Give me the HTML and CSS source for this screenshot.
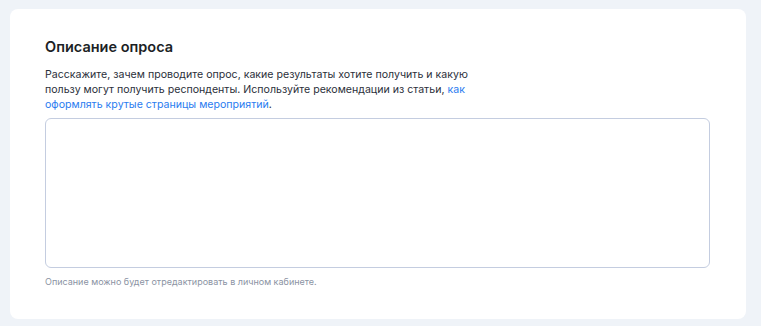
FILE: index.html
```html
<!DOCTYPE html>
<html lang="ru">
<head>
<meta charset="utf-8">
<link rel="stylesheet" href="styles.css">
</head>
<body>
<div class="card">
  <h2 class="title">Описание опроса</h2>
  <p class="desc">Расскажите, зачем проводите опрос, какие результаты хотите получить и какую пользу могут получить респонденты. Используйте рекомендации из статьи, <a class="link" href="#">как оформлять крутые страницы мероприятий</a>.</p>
  <textarea class="field"></textarea>
  <p class="hint">Описание можно будет отредактировать в личном кабинете.</p>
</div>
</body>
</html>
```
FILE: styles.css
```css
html, body {
  margin: 0;
  background: #eff3f8;
}
body {
  padding: 9px 15px 7px 10px;
  font-family: Inter, "Noto Sans", sans-serif;
}
.card {
  background: #ffffff;
  border-radius: 8px;
  padding: 29px 36px 30px 35px;
  height: 310px;
  box-sizing: border-box;
}
.title {
  margin: 0;
  font-size: 14.5px;
  line-height: 18px;
  font-weight: 600;
  color: #1c1f26;
}
.desc {
  margin: 11px 0 0;
  max-width: 440px;
  font-size: 10.6px;
  line-height: 15px;
  color: #2b2f3a;
}
.link {
  color: #2a7cf0;
  text-decoration: none;
}
.field {
  display: block;
  box-sizing: border-box;
  width: 100%;
  height: 150px;
  margin-top: 6px;
  border: 1px solid #c4cde0;
  border-radius: 6px;
  resize: none;
  outline: none;
}
.hint {
  margin: 8px 0 0;
  font-size: 9px;
  line-height: 12px;
  color: #8b93a3;
}
```
